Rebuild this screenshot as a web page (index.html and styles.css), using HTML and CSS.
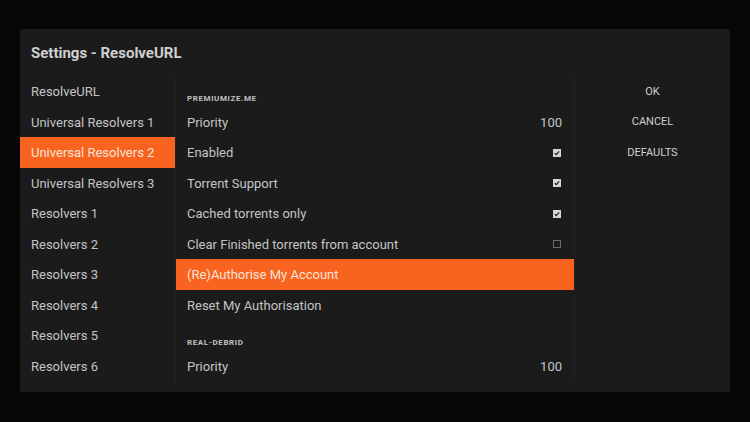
FILE: index.html
```html
<!DOCTYPE html>
<html>
<head>
<meta charset="utf-8">
<link rel="stylesheet" href="styles.css">
</head>
<body>
<div class="screen">
  <div class="dialog">
    <div class="title">Settings - ResolveURL</div>
    <div class="columns">
      <div class="col cats">
        <div class="row">ResolveURL</div>
        <div class="row">Universal Resolvers 1</div>
        <div class="row sel">Universal Resolvers 2</div>
        <div class="row">Universal Resolvers 3</div>
        <div class="row">Resolvers 1</div>
        <div class="row">Resolvers 2</div>
        <div class="row">Resolvers 3</div>
        <div class="row">Resolvers 4</div>
        <div class="row">Resolvers 5</div>
        <div class="row">Resolvers 6</div>
      </div>
      <div class="col opts">
        <div class="row head">PREMIUMIZE.ME</div>
        <div class="row"><span>Priority</span><span class="val">100</span></div>
        <div class="row"><span>Enabled</span><span class="chk on"><svg viewBox="0 0 8 8" width="8" height="8"><path d="M1.8 4.2 L3.3 5.6 L6.2 2.4" fill="none" stroke="#2a2a2a" stroke-width="1.4"/></svg></span></div>
        <div class="row"><span>Torrent Support</span><span class="chk on"><svg viewBox="0 0 8 8" width="8" height="8"><path d="M1.8 4.2 L3.3 5.6 L6.2 2.4" fill="none" stroke="#2a2a2a" stroke-width="1.4"/></svg></span></div>
        <div class="row"><span>Cached torrents only</span><span class="chk on"><svg viewBox="0 0 8 8" width="8" height="8"><path d="M1.8 4.2 L3.3 5.6 L6.2 2.4" fill="none" stroke="#2a2a2a" stroke-width="1.4"/></svg></span></div>
        <div class="row"><span>Clear Finished torrents from account</span><span class="chk off"></span></div>
        <div class="row sel">(Re)Authorise My Account</div>
        <div class="row">Reset My Authorisation</div>
        <div class="row head">REAL-DEBRID</div>
        <div class="row"><span>Priority</span><span class="val">100</span></div>
      </div>
      <div class="col btns">
        <div class="btn">OK</div>
        <div class="btn">CANCEL</div>
        <div class="btn">DEFAULTS</div>
      </div>
    </div>
  </div>
</div>
</body>
</html>
```

FILE: styles.css
```css
html, body {
  margin: 0;
  padding: 0;
  background: #060606;
}
body {
  font-family: Roboto, "Liberation Sans", sans-serif;
  color: #c9c9c9;
}
.screen {
  width: 750px;
  height: 422px;
  padding: 29px 20px 0 20px;
  box-sizing: border-box;
}
.dialog {
  width: 710px;
  height: 363px;
  background: #1b1b1b;
  border-radius: 2px;
  display: flex;
  flex-direction: column;
}
.title {
  height: 47px;
  display: flex;
  align-items: center;
  padding-left: 11px;
  padding-top: 1px;
  font-size: 15px;
  font-weight: 700;
  color: #d0d0d0;
  box-sizing: border-box;
}
.columns {
  display: flex;
  flex: 1;
  padding-bottom: 10px;
}
.col {
  display: flex;
  flex-direction: column;
}
.cats {
  width: 155px;
  border-right: 1px solid #222;
}
.opts {
  width: 398px;
  border-right: 1px solid #222;
}
.btns {
  flex: 1;
  align-items: center;
}
.row {
  height: 30.5px;
  display: flex;
  align-items: center;
  justify-content: space-between;
  padding: 1px 12px 0 11px;
  box-sizing: border-box;
  font-size: 13px;
  color: #c4c4c4;
  white-space: nowrap;
}
.row.sel {
  background: #f8631f;
  color: #fbe3d6;
}
.row.head {
  font-size: 8px;
  font-weight: 700;
  letter-spacing: 0.6px;
  color: #c0c0c0;
  align-items: flex-end;
  padding-bottom: 4px;
}
.val {
  font-size: 13px;
}
.chk {
  width: 8px;
  height: 8px;
  margin-right: 1px;
  box-sizing: border-box;
  display: flex;
}
.chk.on {
  background: #d6d6d6;
}
.chk.off {
  border: 1px solid #6a6a6a;
}
.btn {
  height: 30.5px;
  display: flex;
  align-items: center;
  font-size: 11px;
  color: #cfcfcf;
}
```
